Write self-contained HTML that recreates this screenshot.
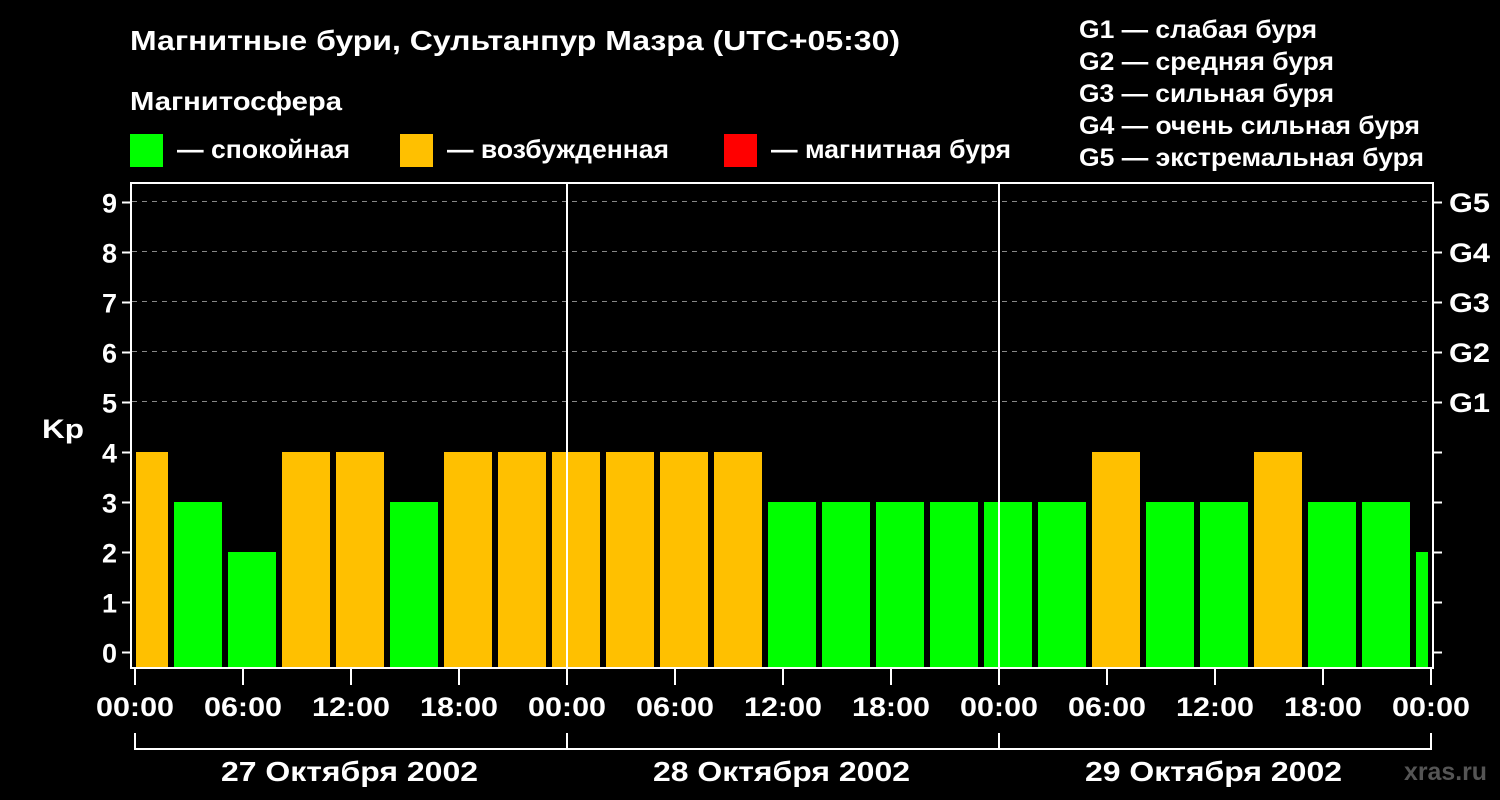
<!DOCTYPE html>
<html><head><meta charset="utf-8"><style>
html,body{margin:0;padding:0;background:#000;width:1500px;height:800px;overflow:hidden}
svg{display:block}
text{font-family:"Liberation Sans",sans-serif;font-weight:bold;fill:#fff}
</style></head><body>
<svg width="1500" height="800" viewBox="0 0 1500 800">
<text x="130" y="50" font-size="28" textLength="770" lengthAdjust="spacingAndGlyphs">Магнитные бури, Сультанпур Мазра (UTC+05:30)</text>
<text x="130" y="110" font-size="26" textLength="212" lengthAdjust="spacingAndGlyphs">Магнитосфера</text>
<rect x="130" y="134" width="33" height="33" fill="#00ff00"/>
<text x="177" y="158" font-size="26" textLength="173" lengthAdjust="spacingAndGlyphs">— спокойная</text>
<rect x="400" y="134" width="33" height="33" fill="#ffc000"/>
<text x="447" y="158" font-size="26" textLength="222" lengthAdjust="spacingAndGlyphs">— возбужденная</text>
<rect x="724" y="134" width="33" height="33" fill="#ff0000"/>
<text x="771" y="158" font-size="26" textLength="240" lengthAdjust="spacingAndGlyphs">— магнитная буря</text>
<g font-size="25">
<text x="1079" y="38" textLength="238" lengthAdjust="spacingAndGlyphs">G1 — слабая буря</text>
<text x="1079" y="70" textLength="255" lengthAdjust="spacingAndGlyphs">G2 — средняя буря</text>
<text x="1079" y="102" textLength="255" lengthAdjust="spacingAndGlyphs">G3 — сильная буря</text>
<text x="1079" y="134" textLength="341" lengthAdjust="spacingAndGlyphs">G4 — очень сильная буря</text>
<text x="1079" y="166" textLength="345" lengthAdjust="spacingAndGlyphs">G5 — экстремальная буря</text>
</g>
<g stroke="#888" stroke-width="1" stroke-dasharray="5,5">
<line x1="132" y1="201.5" x2="1432" y2="201.5"/><line x1="132" y1="251.5" x2="1432" y2="251.5"/>
<line x1="132" y1="301.5" x2="1432" y2="301.5"/><line x1="132" y1="351.5" x2="1432" y2="351.5"/>
<line x1="132" y1="401.5" x2="1432" y2="401.5"/>
</g>
<g id="bars"></g>
<g stroke="#fff" stroke-width="2">
<rect x="131" y="183" width="1302" height="485" fill="none"/>
<line x1="567" y1="183" x2="567" y2="668"/><line x1="999" y1="183" x2="999" y2="668"/>
</g>
<g id="ticks" stroke="#fff" stroke-width="2"></g>
<g font-size="27" text-anchor="end" id="ylab"></g>
<text x="42" y="438" font-size="27" textLength="42" lengthAdjust="spacingAndGlyphs">Kp</text>
<g font-size="27" id="glab">
<text x="1449" y="212" textLength="41" lengthAdjust="spacingAndGlyphs">G5</text><text x="1449" y="262" textLength="41" lengthAdjust="spacingAndGlyphs">G4</text><text x="1449" y="312" textLength="41" lengthAdjust="spacingAndGlyphs">G3</text><text x="1449" y="362" textLength="41" lengthAdjust="spacingAndGlyphs">G2</text><text x="1449" y="412" textLength="41" lengthAdjust="spacingAndGlyphs">G1</text>
</g>
<g font-size="27" id="xlab"></g>
<g stroke="#fff" stroke-width="2" fill="none">
<path d="M135 733V749H1431V733M567 733V749M999 733V749"/>
</g>
<g font-size="28">
<text x="221" y="781" textLength="257" lengthAdjust="spacingAndGlyphs">27 Октября 2002</text>
<text x="653" y="781" textLength="257" lengthAdjust="spacingAndGlyphs">28 Октября 2002</text>
<text x="1085" y="781" textLength="257" lengthAdjust="spacingAndGlyphs">29 Октября 2002</text>
</g>
<text x="1404" y="780" font-size="25" textLength="83" lengthAdjust="spacingAndGlyphs" style="fill:#555">xras.ru</text>
</svg>
<script>
var ns="http://www.w3.org/2000/svg";
var v=[4,3,2,4,4,3,4,4,4,4,4,4,3,3,3,3,3,3,4,3,3,4,3,3,2];
var b=document.getElementById("bars");
v.forEach(function(k,i){var x=120+54*i,w=48;if(x<136){w-=136-x;x=136}if(x+w>1428)w=1428-x;
var r=document.createElementNS(ns,"rect");var top=652-50*k;
r.setAttribute("x",x);r.setAttribute("y",top);r.setAttribute("width",w);r.setAttribute("height",668-top);
r.setAttribute("fill",k>=4?"#ffc000":"#00ff00");b.appendChild(r);});
var t=document.getElementById("ticks"),yl=document.getElementById("ylab"),xl=document.getElementById("xlab");
for(var k=0;k<=9;k++){var y=652-50*k+0.5;
t.innerHTML+='<line x1="122" y1="'+y+'" x2="131" y2="'+y+'"/><line x1="1433" y1="'+y+'" x2="1442" y2="'+y+'"/>';
yl.innerHTML+='<text x="117" y="'+(y+10)+'">'+k+'</text>';}
var labs=["00:00","06:00","12:00","18:00"];
for(var i=0;i<=12;i++){var x=135+108*i;
t.innerHTML+='<line x1="'+x+'" y1="668" x2="'+x+'" y2="685"/>';
xl.innerHTML+='<text x="'+(x-39)+'" y="716" textLength="78" lengthAdjust="spacingAndGlyphs">'+labs[i%4]+'</text>';}
</script>
</body></html>
